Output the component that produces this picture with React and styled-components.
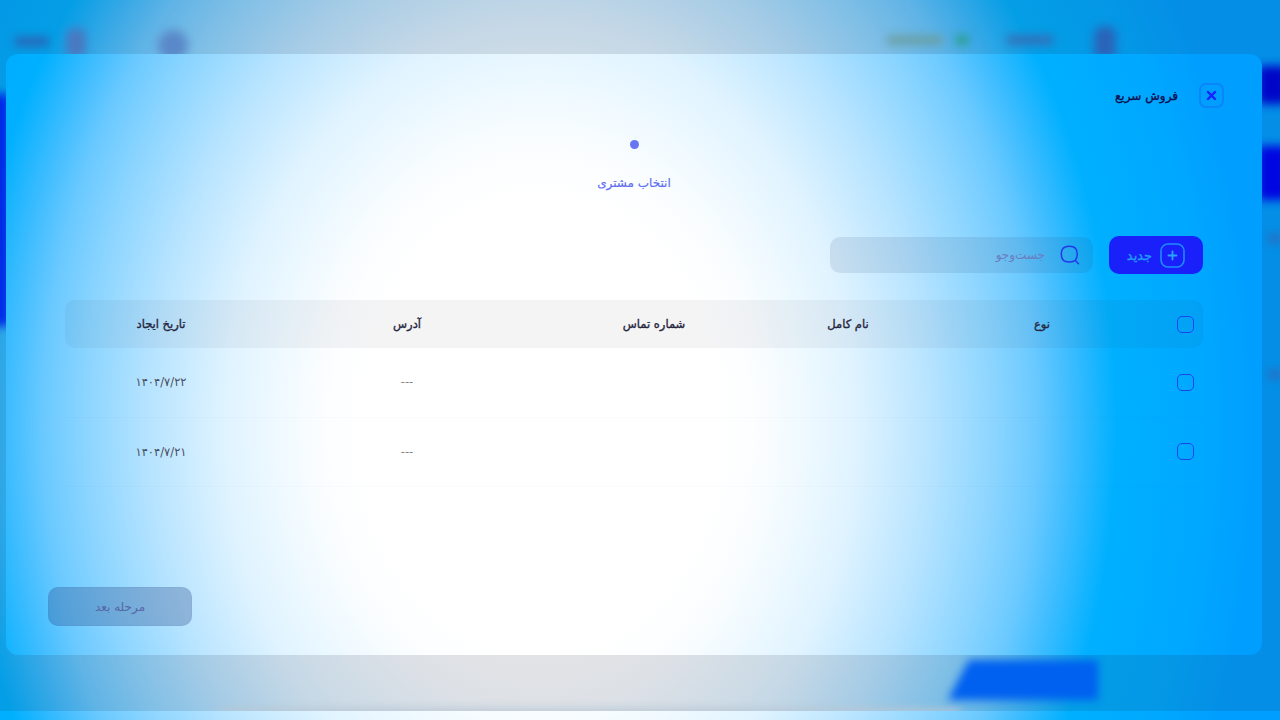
import styled, { createGlobalStyle, css } from 'styled-components';

const FONT = `"DejaVu Sans", "Noto Sans", sans-serif`;

const glow = css`
  background-color: #009eff;
  background-image: radial-gradient(
    720px 910px at 540px 425px,
    #ffffff 0%,
    #ffffff 25%,
    #fafdff 31%,
    #eef9ff 37%,
    #dff3ff 44%,
    #b8e4ff 54%,
    #8cd5ff 63%,
    #6ac9ff 69%,
    #3cbcff 74%,
    #00b0ff 80%,
    #00a8ff 92%,
    #009eff 100%
  );
  background-attachment: fixed;
`;

const GlobalStyle = createGlobalStyle`
  html, body {
    margin: 0;
    padding: 0;
  }
  body {
    font-family: ${FONT};
  }
  * {
    box-sizing: border-box;
  }
`;

const rows = [
  { id: 1, address: '---', createdAt: '۱۴۰۴/۷/۲۲' },
  { id: 2, address: '---', createdAt: '۱۴۰۴/۷/۲۱' },
];

const blobs = [
  { x: -8, y: 94, w: 18, h: 232, bg: '#0028e8', r: 0 },
  { x: 1258, y: 66, w: 30, h: 38, bg: '#0006c8', r: 4 },
  { x: 1258, y: 146, w: 30, h: 54, bg: '#0006e0', r: 0 },
  { x: 1268, y: 234, w: 14, h: 9, bg: '#2a6cc0', r: 4 },
  { x: 1268, y: 370, w: 14, h: 9, bg: '#2a6cc0', r: 4 },
  { x: 14, y: 37, w: 36, h: 9, bg: '#2a64b4', r: 5 },
  { x: 66, y: 28, w: 20, h: 30, bg: '#4a78c0', r: 8 },
  { x: 158, y: 30, w: 30, h: 30, bg: '#5a88c8', r: 15 },
  { x: 886, y: 36, w: 58, h: 8, bg: '#6a9c9c', r: 5 },
  { x: 955, y: 35, w: 14, h: 10, bg: '#2a9c88', r: 5 },
  { x: 1006, y: 36, w: 48, h: 8, bg: '#3a68b0', r: 5 },
  { x: 1094, y: 26, w: 22, h: 34, bg: '#2a64b8', r: 9 },
  { x: 220, y: 709, w: 740, h: 10, bg: '#b8c6d4', r: 0 },
];

const Backdrop = () => (
  <BackdropLayer aria-hidden="true">
    {blobs.map((b) => (
      <Blob key={`${b.x}-${b.y}`} $x={b.x} $y={b.y} $w={b.w} $h={b.h} $bg={b.bg} $r={b.r} />
    ))}
    <BlurredCard />
  </BackdropLayer>
);

const CloseIcon = () => (
  <svg width="11" height="11" viewBox="0 0 11 11" fill="none">
    <path d="M2 2l7 7M9 2l-7 7" stroke="#1a20ff" strokeWidth="2.400" strokeLinecap="round" />
  </svg>
);

const PlusIcon = () => (
  <svg width="25" height="25" viewBox="0 0 25 25" fill="none">
    <rect x="1" y="1" width="23" height="23" rx="7" stroke="#1e8cff" strokeWidth="1.600" />
    <path d="M12.500 8.500v8M8.500 12.500h8" stroke="#2aa4ff" strokeWidth="1.800" strokeLinecap="round" />
  </svg>
);

const SearchIcon = () => (
  <svg width="20" height="20" viewBox="0 0 20 20" fill="none">
    <path
      d="M9 1.200h.6c5 0 7.600 2.500 7.600 7.600v.6c0 5-2.600 7.500-7.600 7.500H9c-5 0-7.700-2.500-7.700-7.500v-.6c0-5.100 2.700-7.600 7.700-7.600z"
      stroke="#2438e8"
      strokeWidth="1.500"
    />
    <path d="M15.600 15.800l2.900 2.900" stroke="#2438e8" strokeWidth="1.500" strokeLinecap="round" />
  </svg>
);

const App = () => {
  return (
    <>
      <GlobalStyle />
      <Page>
        <Backdrop />
        <Modal dir="rtl">
          <Header>
            <CloseButton type="button" aria-label="بستن">
              <CloseIcon />
            </CloseButton>
            <Title>فروش سریع</Title>
          </Header>

          <Stepper>
            <StepDot />
            <StepLabel>انتخاب مشتری</StepLabel>
          </Stepper>

          <Content>
            <Toolbar>
              <NewButton type="button">
                <PlusIcon />
                جدید
              </NewButton>
              <SearchBox>
                <SearchIcon />
                <SearchInput placeholder="جست‌وجو" />
              </SearchBox>
            </Toolbar>

            <Table>
              <HeadRow>
                <Cell>
                  <Check />
                </Cell>
                <HeadCell>نوع</HeadCell>
                <HeadCell>نام کامل</HeadCell>
                <HeadCell>شماره تماس</HeadCell>
                <HeadCell>آدرس</HeadCell>
                <HeadCell>تاریخ ایجاد</HeadCell>
              </HeadRow>
              {rows.map((row) => (
                <BodyRow key={row.id}>
                  <Cell>
                    <Check />
                  </Cell>
                  <Cell />
                  <Cell />
                  <Cell />
                  <EmptyValue>{row.address}</EmptyValue>
                  <Cell>{row.createdAt}</Cell>
                </BodyRow>
              ))}
            </Table>
          </Content>

          <Footer>
            <NextButton type="button" disabled>
              مرحله بعد
            </NextButton>
          </Footer>
        </Modal>
      </Page>
    </>
  );
};

export default App;

const Page = styled.div`
  ${glow}
  position: relative;
  width: 1280px;
  height: 720px;
  overflow: hidden;
  padding: 54px 18px 0 6px;
`;

const BackdropLayer = styled.div`
  position: absolute;
  inset: 0 0 9px 0;
  overflow: hidden;
  background: rgba(28, 40, 62, 0.13);
`;

const Blob = styled.span`
  position: absolute;
  left: ${(p) => p.$x}px;
  top: ${(p) => p.$y}px;
  width: ${(p) => p.$w}px;
  height: ${(p) => p.$h}px;
  background: ${(p) => p.$bg};
  border-radius: ${(p) => p.$r}px;
  filter: blur(5px);
`;

const BlurredCard = styled.span`
  position: absolute;
  left: 948px;
  top: 660px;
  width: 150px;
  height: 40px;
  filter: blur(4px);

  &::before {
    content: '';
    display: block;
    width: 100%;
    height: 100%;
    background: #0060f0;
    clip-path: polygon(14% 0, 100% 0, 100% 100%, 0 100%);
  }
`;

const Modal = styled.div`
  ${glow}
  position: relative;
  display: flex;
  flex-direction: column;
  width: 1256px;
  height: 601px;
  border-radius: 12px;
`;

const Header = styled.div`
  display: flex;
  align-items: center;
  gap: 21px;
  padding: 29px 38px 0;
`;

const CloseButton = styled.button`
  display: flex;
  align-items: center;
  justify-content: center;
  width: 25px;
  height: 25px;
  padding: 0;
  border: 2px solid rgba(30, 80, 240, 0.32);
  border-radius: 7px;
  background: transparent;
`;

const Title = styled.h1`
  margin: 0;
  font-size: 12px;
  font-weight: 400;
  -webkit-text-stroke: 0.35px #0e0e50;
  color: #0e0e50;
`;

const Stepper = styled.div`
  display: flex;
  flex-direction: column;
  align-items: center;
  margin-top: 32px;
`;

const StepDot = styled.span`
  width: 9px;
  height: 9px;
  border-radius: 50%;
  background: #6876f4;
`;

const StepLabel = styled.div`
  margin-top: 26px;
  font-size: 12px;
  line-height: 16px;
  color: #5d6cf0;
  -webkit-text-stroke: 0.15px #5d6cf0;
`;

const Content = styled.div`
  padding: 0 59px;
`;

const Toolbar = styled.div`
  display: flex;
  align-items: center;
  gap: 16px;
  margin-top: 45px;
`;

const NewButton = styled.button`
  display: flex;
  align-items: center;
  justify-content: center;
  gap: 8px;
  width: 94px;
  height: 38px;
  padding: 0;
  border: 0;
  border-radius: 10px;
  background: #1a20fa;
  color: #1f9cff;
  font-family: ${FONT};
  font-size: 13px;
  -webkit-text-stroke: 0.35px #1f9cff;
`;

const SearchBox = styled.label`
  display: flex;
  align-items: center;
  gap: 13px;
  width: 263px;
  height: 36px;
  padding: 0 13px;
  border-radius: 10px;
  background: rgba(40, 60, 110, 0.11);
`;

const SearchInput = styled.input`
  flex: 1;
  min-width: 0;
  border: 0;
  outline: 0;
  background: transparent;
  font-family: ${FONT};
  font-size: 12px;
  color: #222;

  &::placeholder {
    color: #6b7cc0;
    opacity: 1;
  }
`;

const Table = styled.div`
  margin-top: 26px;
`;

const gridColumns = css`
  display: grid;
  grid-template-columns: 36px 250px 138px 250px 244px 220px;
  align-items: center;
`;

const HeadRow = styled.div`
  ${gridColumns}
  height: 48px;
  border-radius: 10px;
  background: rgba(30, 40, 60, 0.05);
`;

const BodyRow = styled.div`
  ${gridColumns}
  height: 69.500px;
  border-bottom: 1px solid rgba(30, 40, 60, 0.02);
`;

const Cell = styled.div`
  display: flex;
  justify-content: center;
  font-size: 11.500px;
  color: #4a4e62;

  &:last-child {
    padding-right: 28px;
  }
`;

const EmptyValue = styled(Cell)`
  color: #85868c;
`;

const HeadCell = styled(Cell)`
  font-size: 11.500px;
  color: #26263e;
  -webkit-text-stroke: 0.35px #26263e;
`;

const Check = styled.span`
  width: 17px;
  height: 17px;
  border: 1.700px solid #1a44f5;
  border-radius: 5px;
`;

const Footer = styled.div`
  display: flex;
  justify-content: flex-end;
  margin-top: auto;
  padding: 0 42px 29px;
`;

const NextButton = styled.button`
  width: 144px;
  height: 39px;
  padding: 0;
  border: 1px solid rgba(40, 70, 140, 0.05);
  border-radius: 10px;
  background: rgba(36, 66, 130, 0.3);
  color: #5568a8;
  font-family: ${FONT};
  font-size: 12px;
`;
